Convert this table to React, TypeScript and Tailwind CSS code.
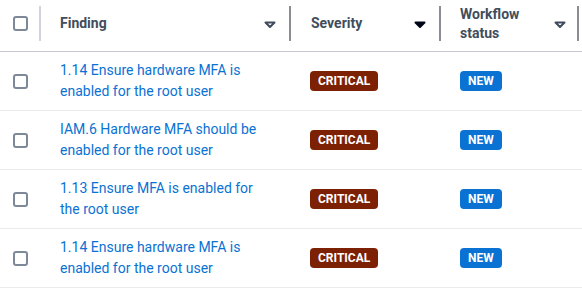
import React from 'react'

const font = { fontFamily: 'Roboto, "Open Sans", sans-serif' }

const rows = [
  ['1.14 Ensure hardware MFA is', 'enabled for the root user'],
  ['IAM.6 Hardware MFA should be', 'enabled for the root user'],
  ['1.13 Ensure MFA is enabled for', 'the root user'],
  ['1.14 Ensure hardware MFA is', 'enabled for the root user'],
]

const Checkbox = () => (
  <div className="w-[15px] h-[15px] rounded-[3px] border-2 border-[#7d8998] bg-white" />
)

const Caret = ({ filled }: { filled?: boolean }) => (
  <svg width="16" height="16" viewBox="0 0 16 16" className="shrink-0">
    <path
      d="M3.5 6.5h9L8 11z"
      fill={filled ? '#000716' : 'none'}
      stroke={filled ? '#000716' : '#414d5c'}
      strokeWidth="2"
      strokeLinejoin="round"
    />
  </svg>
)

const Divider = ({ light }: { light?: boolean }) => (
  <div className={`w-[2px] h-[35px] shrink-0 ${light ? 'bg-[#d1d5db]' : 'bg-[#8c8c94]'}`} />
)

const Badge = ({ label, color }: { label: string; color: string }) => (
  <span
    className={`inline-flex items-center h-[20px] px-[8px] rounded-[4px] text-[12px] font-bold text-white ${color}`}
  >
    {label}
  </span>
)

export default function App() {
  return (
    <div className="w-[582px] h-[288px] bg-white overflow-hidden" style={font}>
      {/* header */}
      <div className="flex h-[52px] border-b border-[#c6c6cd] text-[14px] font-bold text-[#414d5c]">
        <div className="w-[41px] flex items-center pt-[1px] pb-[5px]">
          <div className="ml-[13px] mr-[11px]">
            <Checkbox />
          </div>
          <Divider light />
        </div>
        <div className="w-[250px] flex items-center pt-[1px] pb-[5px]">
          <span className="ml-[19px] flex-1">Finding</span>
          <Caret />
          <div className="w-[11px]" />
          <Divider />
        </div>
        <div className="w-[150px] flex items-center pt-[1px] pb-[5px]">
          <span className="ml-[20px] flex-1">Severity</span>
          <Caret filled />
          <div className="w-[11px]" />
          <Divider />
        </div>
        <div className="w-[138px] flex items-center pt-[1px] pb-[5px]">
          <span className="ml-[19px] flex-1 leading-[19px]">
            Workflow
            <br />
            status
          </span>
          <Caret />
          <div className="w-[9px]" />
          <Divider />
        </div>
      </div>

      {/* rows */}
      {rows.map((r, i) => (
        <div key={i} className="flex items-center h-[59px] border-b border-[#e9ebed]">
          <div className="w-[41px] pl-[13px]">
            <Checkbox />
          </div>
          <div className="w-[250px] pl-[19px] text-[14px] leading-[21px] text-[#0972d3]">
            {r[0]}
            <br />
            {r[1]}
          </div>
          <div className="w-[150px] pl-[19px] flex">
            <Badge label="CRITICAL" color="bg-[#7d2105]" />
          </div>
          <div className="w-[138px] pl-[19px] flex">
            <Badge label="NEW" color="bg-[#0972d3]" />
          </div>
        </div>
      ))}
    </div>
  )
}
